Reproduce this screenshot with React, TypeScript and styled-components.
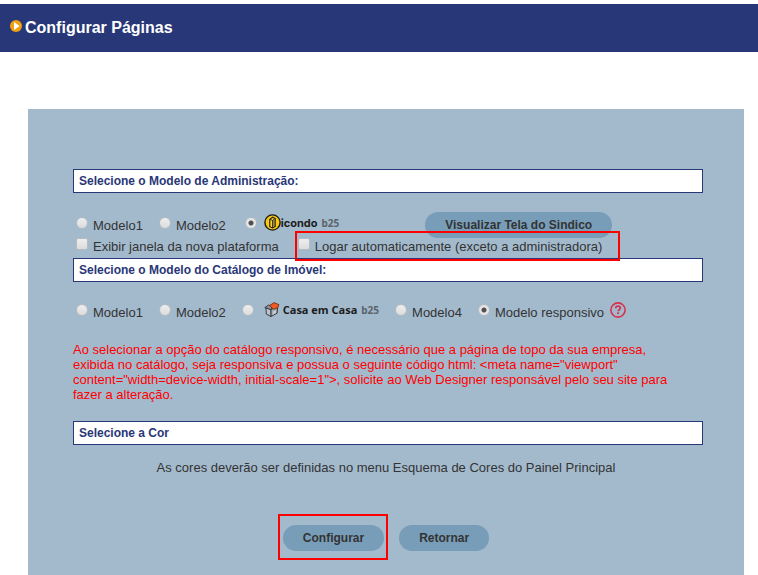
import React from "react";
import styled, { createGlobalStyle, css } from "styled-components";

const navy = "#283777";
const steel = "#a3bacd";
const pill = "#789db9";
const alert = "#ff0000";

const GlobalStyle = createGlobalStyle`
  body {
    margin: 0;
    background: #ffffff;
    color: #333333;
    font: 13px/15px "Liberation Sans", Arial, sans-serif;
  }
  * { box-sizing: border-box; }
`;

const TopBar = styled.header`
  display: flex;
  align-items: center;
  gap: 3px;
  height: 48px;
  margin-top: 4px;
  padding-left: 10px;
  background: ${navy};
  svg { margin-bottom: 5px; }
`;

const Title = styled.h1`
  margin: 0;
  color: #ffffff;
  font-size: 16px;
  line-height: 20px;
`;

const Panel = styled.form`
  margin: 57px 14px 0 28px;
  padding: 60px 41px 24px 45px;
  background: ${steel};
`;

const SectionTitle = styled.h2`
  margin: 0;
  padding: 0 5px;
  border: 1px solid ${navy};
  background: #ffffff;
  color: ${navy};
  font-size: 12px;
  line-height: 22px;
`;

const OptionRow = styled.div<{ $top?: number; $bottom?: number; $gap?: number }>`
  display: flex;
  align-items: center;
  gap: ${(p) => p.$gap ?? 16}px;
  margin-top: ${(p) => p.$top ?? 0}px;
  margin-bottom: ${(p) => p.$bottom ?? 0}px;
  padding-left: 3px;
  white-space: nowrap;
`;

const ring = css`
  position: relative;
  &::after {
    content: "";
    position: absolute;
    border: 2px solid ${alert};
    pointer-events: none;
  }
`;

const Option = styled.label<{ $gap?: number; $indent?: number }>`
  display: flex;
  align-items: center;
  gap: ${(p) => p.$gap ?? 5}px;
  margin-left: ${(p) => p.$indent ?? 0}px;
`;

const RingedOption = styled(Option)`
  ${ring}
  &::after { inset: -7px -18px -6px -3px; }
`;

const control = css`
  appearance: none;
  flex: none;
  width: 12px;
  height: 12px;
  margin: 0 0 5px;
  border: 1px solid #b4bcc2;
  background: linear-gradient(#eeeeee, #dcdcdc);
`;

const Radio = styled.input.attrs({ type: "radio" })`
  ${control}
  border-radius: 50%;
  &:checked {
    background: radial-gradient(circle, #505050 0 2px, #e6e6e6 3px);
  }
`;

const Checkbox = styled.input.attrs({ type: "checkbox" })`
  ${control}
  border-radius: 2px;
  &:checked { background: #505050; }
`;

const Brand = styled.span<{ $gap?: number }>`
  display: flex;
  align-items: center;
  margin-bottom: 5px;
  line-height: 16px;
  svg { margin-right: ${(p) => p.$gap ?? 0}px; }
`;

const BrandName = styled.b<{ $font: string }>`
  color: #1c1c1c;
  font-family: ${(p) => p.$font}, sans-serif;
  font-size: 11px;
`;

const BrandSuffix = styled.b`
  margin-left: 4px;
  color: #5b646b;
  font-family: "Noto Sans", sans-serif;
  font-size: 10px;
`;

const Button = styled.button`
  height: 26px;
  padding: 0 20px;
  border: 0;
  border-radius: 13px;
  background: ${pill};
  color: #333333;
  font: bold 12px/26px "Liberation Sans", Arial, sans-serif;
  cursor: pointer;
`;

const PreviewButton = styled(Button)`
  margin-left: 70px;
`;

const HelpButton = styled.button`
  display: flex;
  margin: 0 0 5px -10px;
  padding: 0;
  border: 0;
  background: none;
  cursor: pointer;
`;

const Warning = styled.p`
  margin: 19px 0 19px;
  padding-right: 20px;
  color: ${alert};
`;

const Note = styled.p`
  margin: 15px 4px 0 0;
  text-align: center;
`;

const Actions = styled.div`
  display: flex;
  justify-content: center;
  gap: 15px;
  margin: 50px 4px 0 0;
`;

const RingedAction = styled.div`
  ${ring}
  &::after { inset: -11px -4px -9px -5px; }
`;

const ArrowIcon = () => (
  <svg width="12" height="12" viewBox="0 0 12 12" aria-hidden="true">
    <circle cx="6" cy="6" r="6" fill="#efa010" />
    <path d="M4 2v8L9.6 6z" fill="#fff" />
  </svg>
);

const CondoIcon = () => (
  <svg width="17" height="17" viewBox="0 0 17 17" aria-hidden="true">
    <circle cx="8.5" cy="8.5" r="7.6" fill="#f9c80e" stroke="#1c1a10" strokeWidth="1.4" />
    <path d="M5.8 5.4 8.6 3.2l2.6 1.3v8L8.6 14l-2.8-1.3z" fill="#f9d440" stroke="#1c1a10" strokeWidth="1.1" />
    <path d="M5.8 5.4 8.5 6.4l2.7-1.9M8.5 6.4V14" fill="none" stroke="#1c1a10" strokeWidth=".8" />
    <path d="M9.9 6v6.6" stroke="#1c1a10" strokeWidth=".7" />
  </svg>
);

const HouseIcon = () => (
  <svg width="16" height="16" viewBox="0 0 16 16" aria-hidden="true">
    <path d="M2 6 7 7.3v7.2L2.3 12z" fill="#b9c5cf" stroke="#3a3a3a" />
    <path d="M7 7.3 13.6 5l-.5 6.2L7 14.5z" fill="#a3a9ad" stroke="#3a3a3a" />
    <path d="M8.8 9.2 12 8v3l-3.2 1.7z" fill="#c3ccd3" />
    <path d="M.8 5.6 4.6 3l4 1.8L7 7.6z" fill="#8d979f" stroke="#3a3a3a" />
    <path d="m5.4 3.6 4.8-3 4.7 2.1-1.2 3.1-4 1.5z" fill="#f15a22" stroke="#5a2a18" strokeWidth=".8" />
  </svg>
);

const HelpIcon = () => (
  <svg width="16" height="16" viewBox="0 0 16 16" fill="none" stroke="#d8304c" aria-hidden="true">
    <circle cx="8" cy="8" r="7.1" strokeWidth="1.6" />
    <path d="M5.7 6.3c0-1.4 1-2.2 2.3-2.2s2.3.8 2.3 2c0 1.6-2.1 1.6-2.1 3.2" strokeWidth="1.7" />
    <path d="M8.1 10.3v1.8" strokeWidth="1.8" />
  </svg>
);

export default function App() {
  return (
    <>
      <GlobalStyle />
      <TopBar>
        <ArrowIcon />
        <Title>Configurar Páginas</Title>
      </TopBar>
      <Panel onSubmit={(e: React.FormEvent) => e.preventDefault()}>
        <SectionTitle>Selecione o Modelo de Administração:</SectionTitle>
        <OptionRow $top={19}>
          <Option><Radio name="admin" />Modelo1</Option>
          <Option><Radio name="admin" />Modelo2</Option>
          <Option $gap={7} $indent={3}>
            <Radio name="admin" defaultChecked />
            <Brand>
              <CondoIcon />
              <BrandName $font="Inter">icondo</BrandName>
              <BrandSuffix>b25</BrandSuffix>
            </Brand>
          </Option>
          <PreviewButton type="button">Visualizar Tela do Sindico</PreviewButton>
        </OptionRow>
        <OptionRow $gap={19} $bottom={3}>
          <Option><Checkbox />Exibir janela da nova plataforma</Option>
          <RingedOption><Checkbox />Logar automaticamente (exceto a administradora)</RingedOption>
        </OptionRow>
        <SectionTitle>Selecione o Modelo do Catálogo de Imóvel:</SectionTitle>
        <OptionRow $top={20}>
          <Option><Radio name="catalog" />Modelo1</Option>
          <Option><Radio name="catalog" />Modelo2</Option>
          <Option $gap={10}>
            <Radio name="catalog" />
            <Brand $gap={3}>
              <HouseIcon />
              <BrandName $font='"Open Sans"'>Casa em Casa</BrandName>
              <BrandSuffix>b25</BrandSuffix>
            </Brand>
          </Option>
          <Option><Radio name="catalog" />Modelo4</Option>
          <Option><Radio name="catalog" defaultChecked />Modelo responsivo</Option>
          <HelpButton type="button" aria-label="Ajuda"><HelpIcon /></HelpButton>
        </OptionRow>
        <Warning>
          Ao selecionar a opção do catálogo responsivo, é necessário que a página de topo da sua empresa,
          exibida no catálogo, seja responsiva e possua o seguinte código html: &lt;meta name="viewport"
          content="width=device-width, initial-scale=1"&gt;, solicite ao Web Designer responsável pelo seu site para
          fazer a alteração.
        </Warning>
        <SectionTitle>Selecione a Cor</SectionTitle>
        <Note>As cores deverão ser definidas no menu Esquema de Cores do Painel Principal</Note>
        <Actions>
          <RingedAction><Button type="submit">Configurar</Button></RingedAction>
          <Button type="button">Retornar</Button>
        </Actions>
      </Panel>
    </>
  );
}
